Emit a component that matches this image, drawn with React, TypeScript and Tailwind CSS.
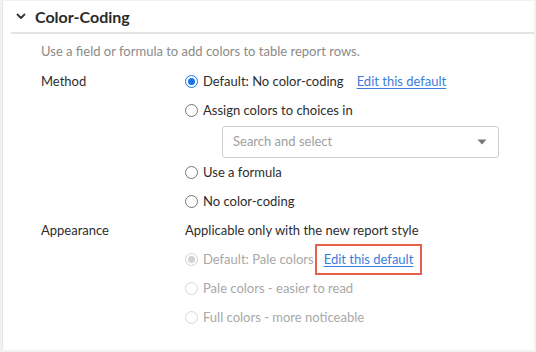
import React from "react";

function Radio({ state }: { state: "checked" | "unchecked" | "disabledChecked" | "disabled" }) {
  if (state === "checked") {
    return (
      <span className="w-[13px] h-[13px] rounded-full border-[1.5px] border-[#1a73e8] bg-white flex items-center justify-center shrink-0">
        <span className="w-[7px] h-[7px] rounded-full bg-[#1a73e8]" />
      </span>
    );
  }
  if (state === "disabledChecked") {
    return (
      <span className="w-[13px] h-[13px] rounded-full border-[1.5px] border-[#d3d3d3] bg-white flex items-center justify-center shrink-0">
        <span className="w-[7px] h-[7px] rounded-full bg-[#d3d3d3]" />
      </span>
    );
  }
  if (state === "disabled") {
    return <span className="w-[13px] h-[13px] rounded-full border border-[#d8d8d8] bg-white shrink-0" />;
  }
  return <span className="w-[13px] h-[13px] rounded-full border border-[#767676] bg-white shrink-0" />;
}

function Row({ children }: { children: React.ReactNode }) {
  return <div className="h-[29px] flex items-center">{children}</div>;
}

export default function App() {
  return (
    <div
      className="w-[536px] h-[352px] bg-[#f2f2f2] pt-[1px] pl-[2px] pr-[2px] pb-[2px]"
      style={{ fontFamily: "Lato, 'Open Sans', sans-serif" }}
    >
      <div className="w-[532px] h-[349px] bg-white border-l border-[#e6e6e6]">
        <div className="h-[31px] flex items-center pl-[13px]">
          <svg width="10" height="7" viewBox="0 0 10 7" className="mr-[9px]">
            <path d="M1.5 1.5 L5 5 L8.5 1.5" fill="none" stroke="#333" strokeWidth="1.8" strokeLinecap="round" strokeLinejoin="round" />
          </svg>
          <span className="text-[16px] font-bold text-[#2b2b2b] leading-none">Color-Coding</span>
        </div>
        <div className="ml-[8px] h-[2px] bg-[#e4e4e4]" />
        <div className="pl-[38px] text-[13px]">
          <div className="h-[33px] flex items-center pt-[2px] text-[#8a8a8a]">
            Use a field or formula to add colors to table report rows.
          </div>
          <div className="flex">
            <div className="w-[144px] text-[#2d2d2d]">
              <div className="h-[29px] flex items-center">Method</div>
            </div>
            <div className="flex flex-col text-[#2d2d2d]">
              <Row>
                <Radio state="checked" />
                <span className="ml-[5px]">Default: No color-coding</span>
                <span className="ml-[13px] text-[#3b7ddd] underline underline-offset-2">Edit this default</span>
              </Row>
              <Row>
                <Radio state="unchecked" />
                <span className="ml-[5px]">Assign colors to choices in</span>
              </Row>
              <div className="h-[33px] flex items-center pl-[37px]">
                <div className="w-[277px] h-[32px] border border-[#cfcfcf] rounded-[3px] flex items-center pl-[10px] pr-[11px] justify-between">
                  <span className="text-[#a0a0a0]">Search and select</span>
                  <svg width="10" height="6" viewBox="0 0 10 6">
                    <path d="M0.5 0.5 L9.5 0.5 L5 5.5 Z" fill="#777" />
                  </svg>
                </div>
              </div>
              <Row>
                <Radio state="unchecked" />
                <span className="ml-[5px]">Use a formula</span>
              </Row>
              <Row>
                <Radio state="unchecked" />
                <span className="ml-[5px]">No color-coding</span>
              </Row>
            </div>
          </div>
          <div className="flex">
            <div className="w-[144px] text-[#2d2d2d]">
              <div className="h-[29px] flex items-center">Appearance</div>
            </div>
            <div className="flex flex-col">
              <Row>
                <span className="text-[#2d2d2d]">Applicable only with the new report style</span>
              </Row>
              <Row>
                <Radio state="disabledChecked" />
                <span className="ml-[5px] text-[#a8a8a8]">Default: Pale colors</span>
                <span className="ml-[1px] h-[31px] px-[7px] border-2 border-[#e8604c] flex items-center">
                  <span className="text-[#3b7ddd] underline underline-offset-2">Edit this default</span>
                </span>
              </Row>
              <Row>
                <Radio state="disabled" />
                <span className="ml-[5px] text-[#a8a8a8]">Pale colors - easier to read</span>
              </Row>
              <Row>
                <Radio state="disabled" />
                <span className="ml-[5px] text-[#a8a8a8]">Full colors - more noticeable</span>
              </Row>
            </div>
          </div>
        </div>
      </div>
    </div>
  );
}
